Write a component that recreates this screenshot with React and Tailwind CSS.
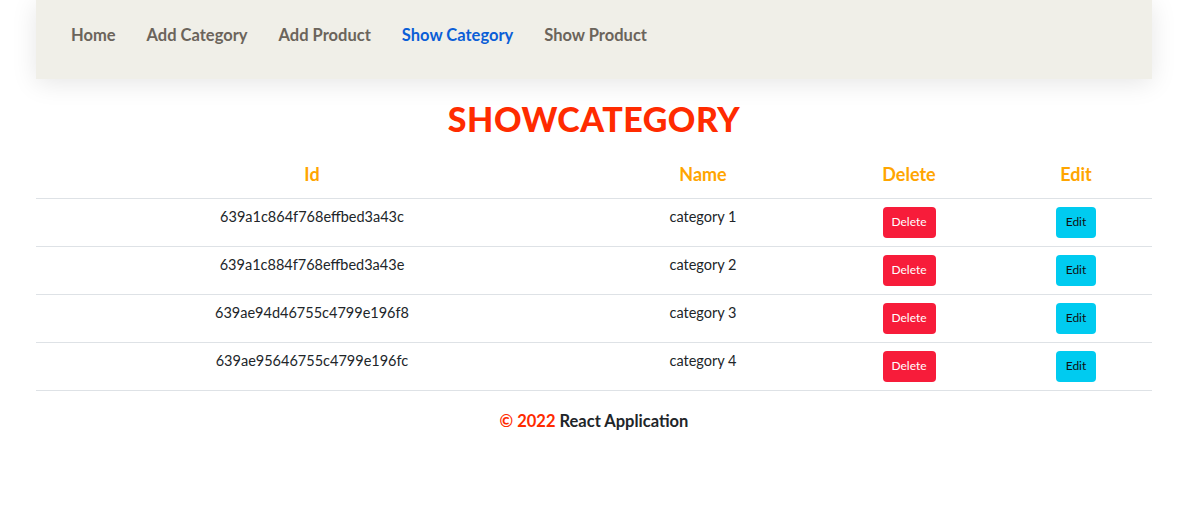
import React from "react";

const rows = [
  ["639a1c864f768effbed3a43c", "category 1"],
  ["639a1c884f768effbed3a43e", "category 2"],
  ["639ae94d46755c4799e196f8", "category 3"],
  ["639ae95646755c4799e196fc", "category 4"],
];

export default function App() {
  const font = { fontFamily: "Lato, 'Noto Sans', sans-serif" };
  return (
    <div className="w-[1192px] min-h-[519px] bg-white" style={font}>
      <div className="ml-[36px] w-[1116px]">
        <nav className="h-[79px] bg-[#f0efe8] shadow-[0_4px_24px_rgba(0,0,0,0.10)] flex items-center pb-[9px] pl-[35px] gap-[31px] text-[16.5px] font-bold text-[#6b645b]">
          <span>Home</span>
          <span>Add Category</span>
          <span>Add Product</span>
          <span className="text-[#0b5ed7]">Show Category</span>
          <span>Show Product</span>
        </nav>
        <h1 className="text-center text-[34px] font-black text-[#ff2b00] leading-none mt-[23px] tracking-[0.5px]">
          SHOWCATEGORY
        </h1>
        <table className="w-full mt-[15px] border-collapse text-[14.5px] text-[#212529]">
          <thead>
            <tr className="h-[47px] border-b border-[#dee2e6] text-[#ffa500] text-[18px] font-bold">
              <th className="w-[552px] font-bold pt-[1px]">Id</th>
              <th className="w-[230px] font-bold pt-[1px]">Name</th>
              <th className="w-[182px] font-bold pt-[1px]">Delete</th>
              <th className="w-[152px] font-bold pt-[1px]">Edit</th>
            </tr>
          </thead>
          <tbody>
            {rows.map(([id, name]) => (
              <tr key={id} className="h-[48px] border-b border-[#dee2e6] align-top">
                <td className="text-center pt-[7px]">{id}</td>
                <td className="text-center pt-[7px]">{name}</td>
                <td className="text-center pt-[8px]">
                  <button className="h-[31px] w-[53px] rounded-[4px] bg-[#f71c3a] text-white text-[12px]">Delete</button>
                </td>
                <td className="text-center pt-[8px]">
                  <button className="h-[31px] w-[40px] rounded-[4px] bg-[#00cbf0] text-[#111] text-[12px]">Edit</button>
                </td>
              </tr>
            ))}
          </tbody>
        </table>
        <p className="text-center mt-[18px] text-[16.5px] font-bold text-[#212529]">
          <span className="text-[#ff2b00]">© 2022</span> React Application
        </p>
      </div>
    </div>
  );
}
